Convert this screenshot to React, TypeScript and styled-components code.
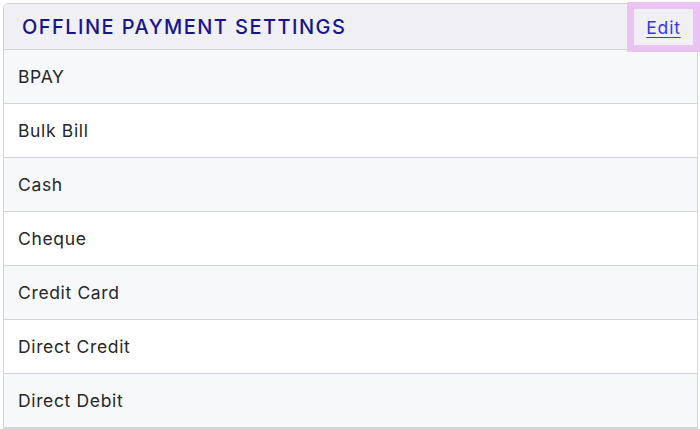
import styled, { createGlobalStyle } from "styled-components";

const GlobalStyle = createGlobalStyle`
    html, body {
        margin: 0;
        padding: 0;
        background: #ffffff;
        overflow: hidden;
    }
    body {
        font-family: Inter, "Open Sans", "Liberation Sans", sans-serif;
    }
`

const Page = styled.div`
    padding: 3px 2px 0 3px;
`

const Card = styled.section`
    border: 1px solid #d3d4da;
    border-radius: 5px 5px 0 0;
`

const Header = styled.header`
    display: flex;
    align-items: center;
    justify-content: space-between;
    height: 45px;
    padding: 0 4px 0 18px;
    background: #f0eff4;
    border-bottom: 1px solid #d3d4da;
    border-radius: 5px 5px 0 0;
`

const Title = styled.h2`
    margin: 0;
    font-size: 20px;
    font-weight: 500;
    letter-spacing: 1.45px;
    color: #16168a;
    text-transform: uppercase;
`

const EditButton = styled.a`
    display: flex;
    align-items: center;
    justify-content: center;
    width: 59px;
    height: 36px;
    margin-top: 1px;
    outline: 7px solid #ebc2f4;
    background: #f0eff4;
    color: #3434f4;
    font-size: 17.5px;
    letter-spacing: 0.8px;
    text-decoration: underline;
    text-underline-offset: 3px;
    cursor: pointer;
`

const Row = styled.div<{ $shaded: boolean }>`
    display: flex;
    align-items: center;
    height: 53px;
    padding: 0 14px;
    background: ${({ $shaded }) => ($shaded ? '#f7f8fa' : '#ffffff')};
    border-bottom: 1px solid #d3d4da;
    font-size: 17.5px;
    letter-spacing: 0.65px;
    color: #262628;
`

const methods = [
    "BPAY",
    "Bulk Bill",
    "Cash",
    "Cheque",
    "Credit Card",
    "Direct Credit",
    "Direct Debit",
];

function App() {
    return (
        <>
            <GlobalStyle />
            <Page>
                <Card>
                    <Header>
                        <Title>Offline Payment Settings</Title>
                        <EditButton>Edit</EditButton>
                    </Header>
                    {methods.map((name, i) => (
                        <Row key={name} $shaded={i % 2 === 0}>{name}</Row>
                    ))}
                </Card>
            </Page>
        </>
    )
}

export default App;
